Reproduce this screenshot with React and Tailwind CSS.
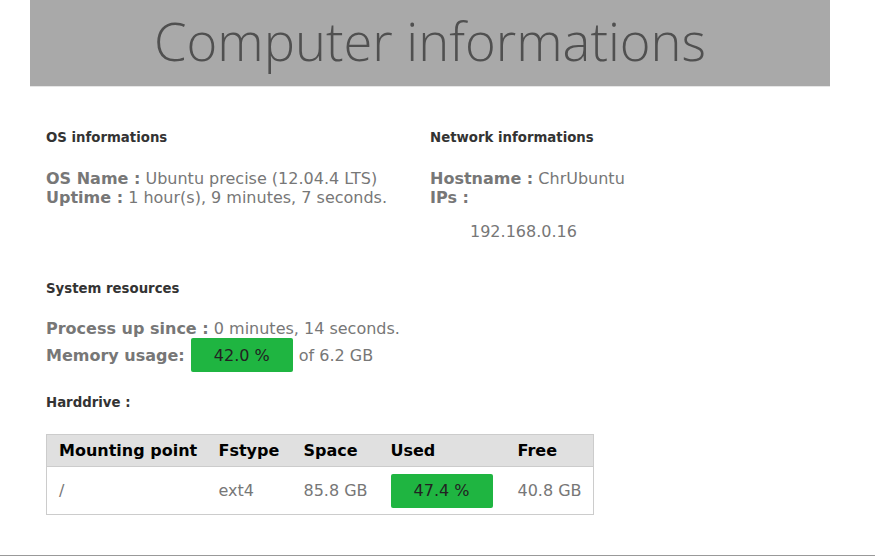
const DISKS = [
  { mount: '/', fstype: 'ext4', space: '85.8 GB', used: '47.4 %', free: '40.8 GB' },
];

function Bar({ children }) {
  return (
    <div className="w-[102px] h-[34px] rounded-[2px] bg-[#1fb541] text-[#222] flex items-center justify-center">
      {children}
    </div>
  );
}

function Heading({ children }) {
  return <h3 className="text-[13.3px] leading-4 font-bold text-[#333]">{children}</h3>;
}

export default function App() {
  return (
    <div className="bg-white font-['DejaVu_Sans',sans-serif] text-[16px] leading-[19px] text-[#777] flex flex-col">
      <div className="w-[800px] ml-[30px]">
        <header className="h-[86px] bg-[#a9a9a9] border-b border-[#e6e6e6] box-content flex items-center justify-center">
          <h1 className="font-['Open_Sans',sans-serif] font-light text-[52.5px] leading-none text-[#505050] -mt-1">
            Computer informations
          </h1>
        </header>

        <main className="px-4 pt-[43px] pb-10 whitespace-nowrap">
          <div className="grid grid-cols-2">
            <section>
              <Heading>OS informations</Heading>
              <div className="mt-[23px]">
                <p><b>OS Name :</b> Ubuntu precise (12.04.4 LTS)</p>
                <p><b>Uptime :</b> 1 hour(s), 9 minutes, 7 seconds.</p>
              </div>
            </section>
            <section>
              <Heading>Network informations</Heading>
              <div className="mt-[23px]">
                <p><b>Hostname :</b> ChrUbuntu</p>
                <p><b>IPs :</b></p>
                <ul className="mt-[15px] pl-10">
                  <li>192.168.0.16</li>
                </ul>
              </div>
            </section>
          </div>

          <section className="mt-10">
            <Heading>System resources</Heading>
            <p className="mt-[22px]"><b>Process up since :</b> 0 minutes, 14 seconds.</p>
            <div className="flex items-center">
              <b className="mr-[6px]">Memory usage:</b>
              <Bar>42.0 %</Bar>
              <span className="ml-[6px]">of 6.2 GB</span>
            </div>
          </section>

          <section className="mt-[23px]">
            <Heading>Harddrive :</Heading>
            <table className="mt-[23px] w-[547px] table-fixed border border-[#cccccc] border-collapse">
              <thead>
                <tr className="bg-[#e0e0e0] text-black text-left h-[32px]">
                  <th className="w-[160px] px-3 font-bold">Mounting point</th>
                  <th className="w-[85px] px-3 font-bold">Fstype</th>
                  <th className="w-[87px] px-3 font-bold">Space</th>
                  <th className="w-[127px] px-3 font-bold">Used</th>
                  <th className="w-[88px] px-3 font-bold">Free</th>
                </tr>
              </thead>
              <tbody>
                {DISKS.map((d) => (
                  <tr key={d.mount} className="border-t border-[#cccccc] h-[48px]">
                    <td className="px-3">{d.mount}</td>
                    <td className="px-3">{d.fstype}</td>
                    <td className="px-3">{d.space}</td>
                    <td className="px-3"><Bar>{d.used}</Bar></td>
                    <td className="px-3">{d.free}</td>
                  </tr>
                ))}
              </tbody>
            </table>
          </section>
        </main>
      </div>
      <hr className="border-0 h-px bg-[#999]" />
    </div>
  );
}
